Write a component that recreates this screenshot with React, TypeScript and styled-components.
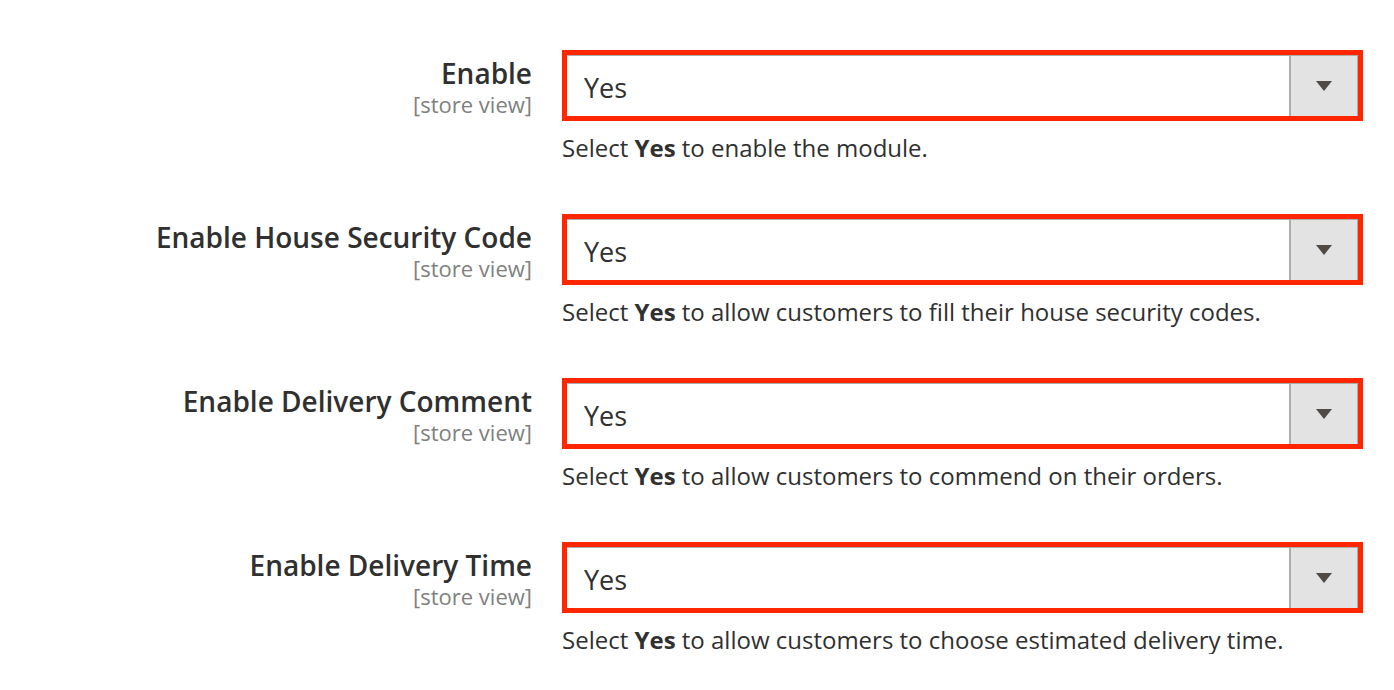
import React from "react";
import styled, { createGlobalStyle } from "styled-components";

const GlobalStyle = createGlobalStyle`
  html, body {
    margin: 0;
    padding: 0;
    background: #ffffff;
    font-family: "Open Sans", "Noto Sans", sans-serif;
    color: #303030;
  }
`;

interface Field {
  label: string;
  note: string;
}

const fields: Field[] = [
  { label: "Enable", note: "to enable the module." },
  {
    label: "Enable House Security Code",
    note: "to allow customers to fill their house security codes.",
  },
  {
    label: "Enable Delivery Comment",
    note: "to allow customers to commend on their orders.",
  },
  {
    label: "Enable Delivery Time",
    note: "to allow customers to choose estimated delivery time.",
  },
];

const ArrowIcon = () => (
  <svg width="16" height="10" viewBox="0 0 16 10">
    <path d="M0 0 H16 L8 10 Z" fill="#514943" />
  </svg>
);

export default function App() {
  return (
    <>
      <GlobalStyle />
      <Page>
        {fields.map((f) => (
          <Row key={f.label}>
            <LabelCol>
              <Label>{f.label}</Label>
              <Scope>[store view]</Scope>
            </LabelCol>
            <ControlCol>
              <Highlight>
                <Select>
                  <Value>Yes</Value>
                  <ArrowButton>
                    <ArrowIcon />
                  </ArrowButton>
                </Select>
              </Highlight>
              <Note>
                Select <b>Yes</b> {f.note}
              </Note>
            </ControlCol>
          </Row>
        ))}
      </Page>
    </>
  );
}

const Page = styled.div`
  padding-top: 50px;
  display: flex;
  flex-direction: column;
  gap: 52px;
`;

const Row = styled.div`
  display: grid;
  grid-template-columns: 532px 801px;
  column-gap: 30px;
  height: 112px;
`;

const LabelCol = styled.div`
  display: flex;
  flex-direction: column;
  align-items: flex-end;
  padding-top: 7px;
`;

const Label = styled.div`
  font-size: 28px;
  font-weight: 600;
  line-height: 32px;
  color: #303030;
`;

const Scope = styled.div`
  font-size: 22px;
  line-height: 30px;
  color: #808080;
`;

const ControlCol = styled.div`
  display: flex;
  flex-direction: column;
`;

const Highlight = styled.div`
  border: 5px solid #ff2600;
  height: 61px;
`;

const Select = styled.div`
  display: flex;
  height: 100%;
  border-top: 1px solid #adadad;
  box-sizing: border-box;
  background: #ffffff;
`;

const Value = styled.div`
  flex: 1;
  display: flex;
  align-items: center;
  padding-left: 17px;
  padding-top: 2px;
  font-size: 27px;
  color: #303030;
`;

const ArrowButton = styled.div`
  width: 66px;
  border-left: 2px solid #adadad;
  border-right: 1px solid #adadad;
  background: #e3e3e3;
  display: flex;
  align-items: center;
  justify-content: center;
`;

const Note = styled.div`
  margin-top: 11px;
  font-size: 24px;
  line-height: 32px;
  color: #303030;

  b {
    font-weight: 700;
  }
`;
